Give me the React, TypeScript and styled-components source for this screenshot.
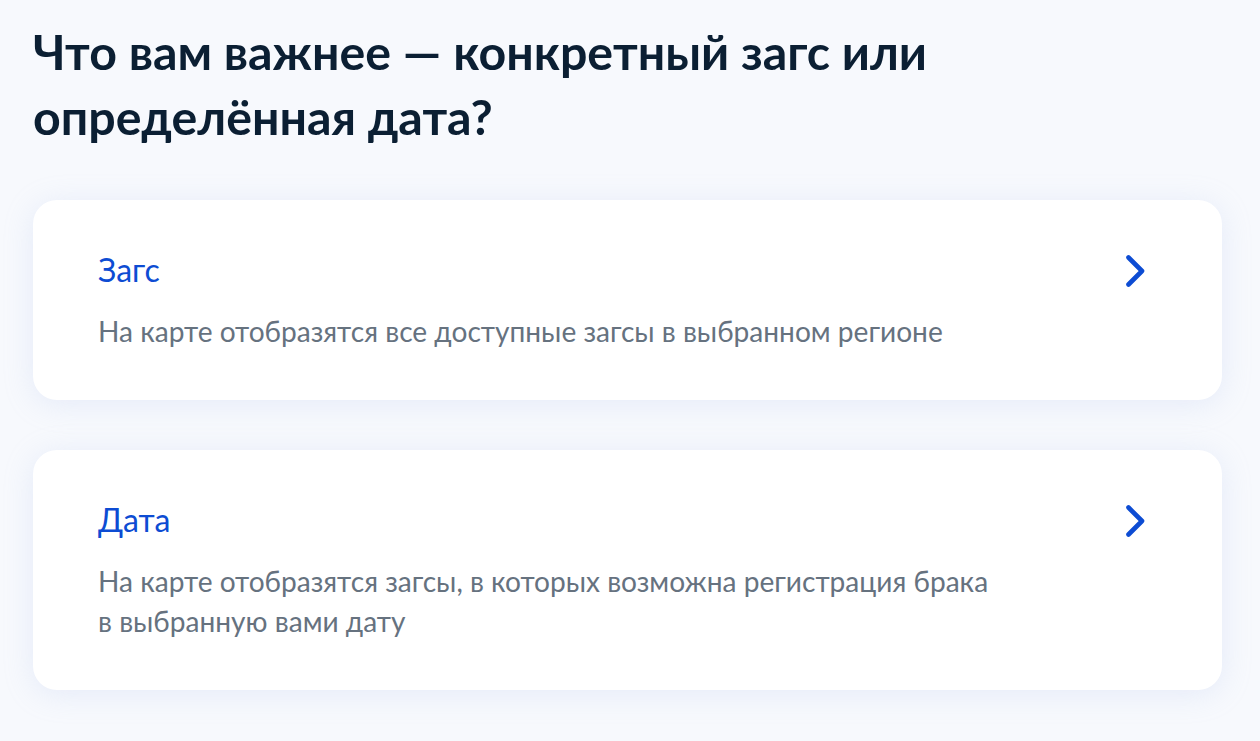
import React from "react";
import styled, { createGlobalStyle } from "styled-components";

const GlobalStyle = createGlobalStyle`
   html, body {
      margin: 0;
      padding: 0;
   }

   body {
      background: #f7f9fd;
      font-family: Lato, "Noto Sans", sans-serif;
      -webkit-font-smoothing: antialiased;
   }
`;

const options = [
   {
      id: "office",
      title: "Загс",
      text: ["На карте отобразятся все доступные загсы в выбранном регионе"],
   },
   {
      id: "date",
      title: "Дата",
      text: [
         "На карте отобразятся загсы, в которых возможна регистрация брака",
         "в выбранную вами дату",
      ],
   },
];

const Chevron = () => (
   <svg width="32" height="32" viewBox="0 0 32 32" fill="none">
      <path
         d="M8.5 2.5 L22 16 L8.5 29.5"
         stroke="#0d4cd3"
         strokeWidth="4.6"
         strokeLinecap="round"
         strokeLinejoin="round"
      />
   </svg>
);

const App = () => {
   return (
      <>
         <GlobalStyle />
         <Page>
            <Title>
               Что вам важнее — конкретный загс или
               <br />
               определённая дата?
            </Title>

            <List>
               {options.map((option) => (
                  <Card key={option.id} href="#">
                     <Body>
                        <CardTitle>{option.title}</CardTitle>
                        <Description>
                           {option.text.map((line, i) => (
                              <React.Fragment key={i}>
                                 {i > 0 && <br />}
                                 {line}
                              </React.Fragment>
                           ))}
                        </Description>
                     </Body>
                     <Arrow>
                        <Chevron />
                     </Arrow>
                  </Card>
               ))}
            </List>
         </Page>
      </>
   );
};

const Page = styled.main`
   width: 1189px;
   min-height: 741px;
   box-sizing: border-box;
   margin-left: 33px;
   padding-top: 19px;
`;

const Title = styled.h1`
   margin: 0 0 51px;
   font-size: 48.3px;
   line-height: 65px;
   font-weight: 700;
   color: #0b1f33;
`;

const List = styled.div`
   display: flex;
   flex-direction: column;
   gap: 50px;
`;

const Card = styled.a`
   display: flex;
   align-items: flex-start;
   justify-content: space-between;
   padding: 50px 70px 49px 65px;
   background: #ffffff;
   border-radius: 24px;
   box-shadow: 0 4px 30px rgba(170, 185, 230, 0.22);
   text-decoration: none;
`;

const Body = styled.div`
   display: flex;
   flex-direction: column;
   gap: 21px;
`;

const CardTitle = styled.span`
   font-size: 32px;
   line-height: 40px;
   color: #0d4cd3;
`;

const Description = styled.p`
   margin: 0;
   font-size: 28.1px;
   line-height: 40px;
   color: #66727f;
`;

const Arrow = styled.span`
   display: flex;
   margin-top: 5px;
`;

export default App;
